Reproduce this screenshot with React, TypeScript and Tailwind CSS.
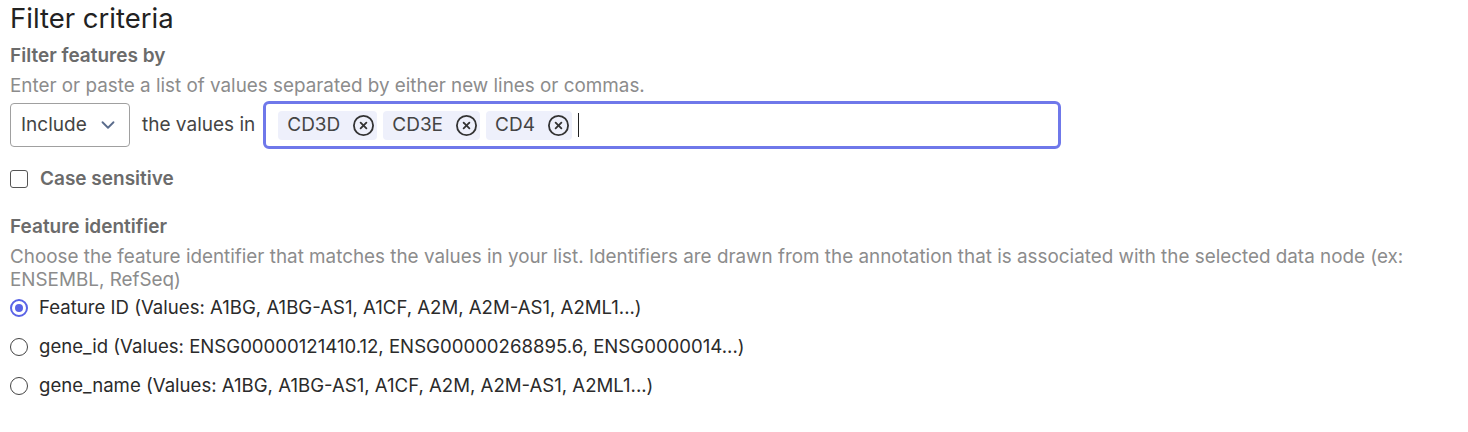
import React from 'react';
import { ChevronDown, CircleX } from 'lucide-react';

const chips = ['CD3D', 'CD3E', 'CD4'];

const options = [
  { id: 'feature', label: 'Feature ID (Values: A1BG, A1BG-AS1, A1CF, A2M, A2M-AS1, A2ML1...)' },
  { id: 'gene_id', label: 'gene_id (Values: ENSG00000121410.12, ENSG00000268895.6, ENSG0000014...)' },
  { id: 'gene_name', label: 'gene_name (Values: A1BG, A1BG-AS1, A1CF, A2M, A2M-AS1, A2ML1...)' },
];

export default function App() {
  const selected = 'feature';

  return (
    <div className="w-[1468px] h-[432px] bg-white px-[10px] text-[19px] font-['Inter',sans-serif]">
      <h2 className="text-[27.5px] leading-[36px] text-[#222] font-normal">Filter criteria</h2>

      {/* Filter features by */}
      <div className="mt-[8px] leading-[24px] font-semibold text-[#6b6b6b]">Filter features by</div>
      <div className="mt-[6px] text-[18.85px] leading-[24px] text-[#8c8c8c]">
        Enter or paste a list of values separated by either new lines or commas.
      </div>

      <div className="mt-[3px] flex items-center">
        <button className="w-[120px] h-[44px] flex items-center justify-between pl-[10px] pr-[10px] border border-[#a0a0a0] rounded-[4px] text-[#444]">
          <span>Include</span>
          <ChevronDown className="w-[22px] h-[22px] text-[#5a6c8c]" strokeWidth={2} />
        </button>
        <span className="ml-[12px] text-[#444]">the values in</span>
        <div className="ml-[8px] w-[798px] h-[48px] flex items-center gap-[6px] px-[12px] border-[3px] border-[#6f78ea] rounded-[6px]">
          {chips.map((c) => (
            <div key={c} className="h-[29px] flex items-center gap-[12px] pl-[9px] pr-[2px] bg-[#eef0fb] rounded-[4px] text-[#444]">
              <span>{c}</span>
              <CircleX className="w-[23px] h-[23px] text-[#333]" strokeWidth={1.9} />
            </div>
          ))}
          <span className="w-[1px] h-[24px] bg-[#222]" />
        </div>
      </div>

      <label className="mt-[18px] flex items-center gap-[12px] h-[24px]">
        <span className="w-[18px] h-[18px] border border-[#555] rounded-[3px]" />
        <span className="font-semibold text-[#6b6b6b]">Case sensitive</span>
      </label>

      {/* Feature identifier */}
      <div className="mt-[24px] leading-[24px] font-semibold text-[#6b6b6b]">Feature identifier</div>
      <div className="mt-[6px] text-[18.85px] leading-[23px] text-[#8c8c8c]">
        Choose the feature identifier that matches the values in your list. Identifiers are drawn from the annotation that is associated with the selected data node (ex: ENSEMBL, RefSeq)
      </div>

      <div className="mt-[5px] flex flex-col gap-[15px]">
        {options.map((o) => (
          <label key={o.id} className="flex items-center gap-[11px] h-[24px]">
            {selected === o.id ? (
              <span className="w-[18px] h-[18px] rounded-full border-[2px] border-[#5a63e6] flex items-center justify-center">
                <span className="w-[8px] h-[8px] rounded-full bg-[#5a63e6]" />
              </span>
            ) : (
              <span className="w-[18px] h-[18px] rounded-full border border-[#444]" />
            )}
            <span className="text-[18.6px] text-[#2b2b2b]">{o.label}</span>
          </label>
        ))}
      </div>
    </div>
  );
}
